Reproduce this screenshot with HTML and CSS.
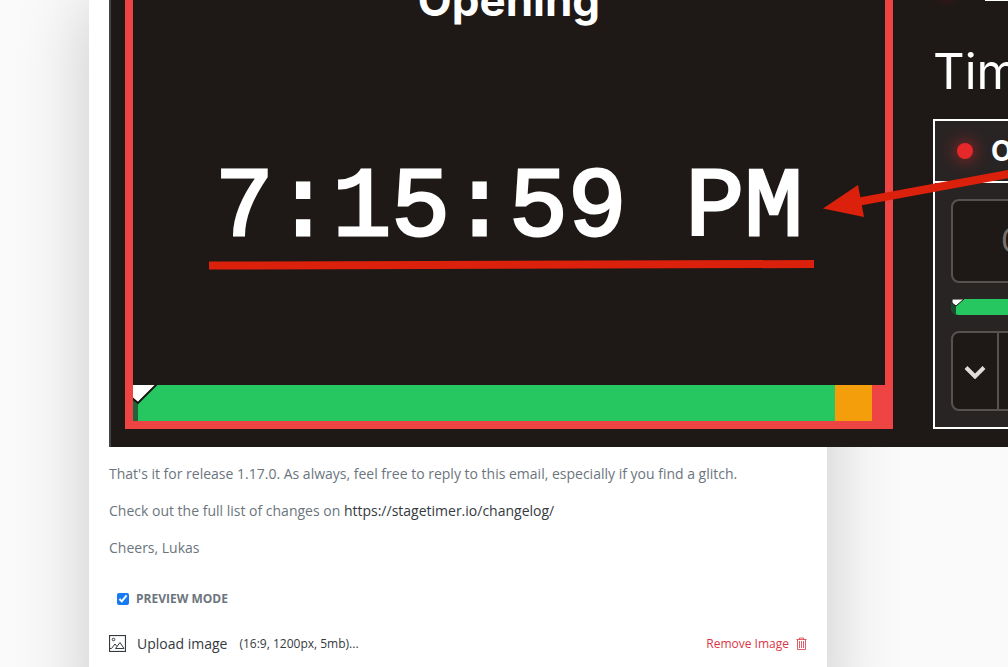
FILE: index.html
```html
<!DOCTYPE html>
<html lang="en">
<head>
<meta charset="utf-8">
<title>Release 1.17.0</title>
<link rel="stylesheet" href="styles.css">
</head>
<body>
<main class="card">
  <figure class="shot">
    <section class="screen">
      <h2 class="screen-title">Opening</h2>
      <div class="clock">7:15:59 PM</div>
      <div class="progress">
        <span class="progress-done"></span>
        <span class="progress-green"></span>
        <span class="progress-amber"></span>
        <span class="progress-red"></span>
        <svg class="marker" viewBox="0 0 26 20" aria-hidden="true"><path d="M-1-2H25L5 18-1 13Z" fill="#fff" stroke="#17130f" stroke-width="2"/></svg>
      </div>
    </section>
    <aside class="side">
      <div class="side-top"><span class="glow"></span><span class="dash"></span></div>
      <h2 class="side-title">Timers</h2>
      <div class="panel">
        <div class="panel-head"><span class="dot"></span><span>Opening</span></div>
        <div class="panel-body">
          <div class="time-box">0:00</div>
          <div class="mini-bar"><svg class="mini-marker" viewBox="0 0 14 16" aria-hidden="true"><path d="M0 0H5V16Q0 14 0 9Z" fill="#1c4a2e"/><path d="M1 0H13L5 7 1 4Z" fill="#fff" stroke="#17130f" stroke-width="1"/></svg></div>
          <div class="button-row">
            <button class="chevron" type="button" aria-label="Expand"><svg width="22" height="14" viewBox="0 0 22 14"><path d="M2 2.500 11 11.500 20 2.500" fill="none" stroke="#e1dddc" stroke-width="4"/></svg></button>
          </div>
        </div>
      </div>
    </aside>
    <svg class="notes" viewBox="0 0 1180 447" aria-hidden="true">
      <path d="M100 265.500 705 264" stroke="#db200b" stroke-width="8" fill="none"/>
      <path d="M748 202 905 173" stroke="#db200b" stroke-width="8" fill="none"/>
      <path d="M714 208.500 749 185 755 217Z" fill="#db200b"/>
    </svg>
  </figure>
  <div class="message">
    <p>That's it for release 1.17.0. As always, feel free to reply to this email, especially if you find a glitch.</p>
    <p>Check out the full list of changes on <a href="https://stagetimer.io/changelog/">https://stagetimer.io/changelog/</a></p>
    <p>Cheers, Lukas</p>
  </div>
  <label class="preview"><input type="checkbox" checked><span>Preview mode</span></label>
  <div class="actions">
    <button class="upload" type="button">
      <svg width="17" height="17" viewBox="0 0 17 17" fill="none" stroke="#343a40"><rect x=".5" y=".5" width="16" height="16" stroke-width="1.200"/><circle cx="4.500" cy="4.500" r="1.300"/><path d="M.5 13.500H2.500L6 9 8 11.500 11 7.500 15 13.500H6.500L8 11.500"/></svg>
      <span>Upload image</span><small>(16:9, 1200px, 5mb)...</small>
    </button>
    <button class="remove" type="button">
      <span>Remove Image</span>
      <svg width="11" height="13" viewBox="0 0 11 13" fill="none" stroke="#dc3545" stroke-width=".8"><path d="M.5 2.500H10.500M3.500 2.500V1H7.500V2.500M1.500 2.500V12.500H9.500V2.500M3.500 4V11M5.500 4V11M7.500 4V11"/></svg>
    </button>
  </div>
</main>
</body>
</html>
```
FILE: styles.css
```css
html {
  overflow: hidden;
}

body {
  margin: 0;
  background: #fafafa;
  font: 14px/21px "Open Sans", sans-serif;
  color: #6c757d;
}

.card {
  box-sizing: border-box;
  min-height: 100vh;
  margin: 0 181px 0 89px;
  padding: 0 20px 80px;
  background: #fff;
  box-shadow: 0 0 70px rgba(0, 0, 0, 0.2);
}

.shot {
  position: relative;
  box-sizing: border-box;
  width: 1180px;
  margin: 0;
  padding: 0 0 18px 14px;
  border-left: 2px solid #454343;
  background: #1e1916;
  color: #fff;
  font-family: Inter, sans-serif;
  display: grid;
  grid-template-columns: 768px 1fr;
  column-gap: 40px;
}

.screen {
  display: flex;
  flex-direction: column;
  border: 8px solid #ef4444;
  border-top: 0;
}

.screen-title {
  margin: 0;
  font-size: 44px;
  line-height: 0;
  font-weight: 700;
  text-align: center;
}

.clock {
  flex: 1;
  display: flex;
  align-items: center;
  justify-content: center;
  padding-top: 32px;
  font: 98px/100px "Liberation Mono", monospace;
  -webkit-text-stroke: 3px #fff;
}

.progress {
  position: relative;
  display: flex;
  height: 36px;
}

.progress-done {
  width: 5px;
  background: #23633b;
}

.progress-green {
  flex: 1;
  background: #26c761;
}

.progress-amber {
  width: 37px;
  background: #f59e0b;
}

.progress-red {
  width: 13px;
  background: #ef4444;
}

.marker {
  position: absolute;
  left: 0;
  top: 0;
  width: 26px;
  height: 20px;
}

.side-top {
  display: flex;
  justify-content: space-between;
  width: 240px;
  height: 42px;
}

.glow {
  width: 28px;
  height: 8px;
  background: radial-gradient(ellipse at top, #2e1717, transparent 70%);
}

.dash {
  width: 188px;
  height: 1px;
  background: #fff;
}

.side-title {
  margin: 0 0 17px;
  font-size: 49px;
  line-height: 60px;
  font-weight: 400;
}

.panel {
  border: 2px solid #fff;
  background: #292424;
}

.panel-head {
  display: flex;
  align-items: center;
  gap: 18px;
  height: 60px;
  padding-left: 22px;
  border-bottom: 2px solid #fff;
  font-size: 28px;
  font-weight: 700;
}

.dot {
  width: 16px;
  height: 16px;
  border-radius: 50%;
  background: #e7282b;
  box-shadow: 0 0 16px 2px rgba(220, 38, 38, 0.6);
}

.panel-body {
  display: flex;
  flex-direction: column;
  gap: 16px;
  padding: 16px;
}

.time-box,
.button-row {
  border: 2px solid #57524f;
  border-radius: 8px;
  background: #1e1916;
}

.time-box {
  padding-left: 48px;
  font-size: 32px;
  line-height: 80px;
  color: #78716c;
}

.mini-bar {
  position: relative;
  height: 16px;
  border-radius: 8px;
  background: #26c761;
}

.mini-marker {
  position: absolute;
  left: 0;
  top: 0;
  width: 14px;
  height: 16px;
}

.button-row {
  display: flex;
  height: 76px;
}

button {
  display: flex;
  align-items: center;
  margin: 0;
  padding: 0;
  border: 0;
  background: none;
  font: inherit;
  color: inherit;
}

.chevron {
  justify-content: center;
  width: 46px;
  padding-top: 2px;
  border-right: 2px solid #57524f;
}

.notes {
  position: absolute;
  left: -2px;
  top: 0;
  width: 1180px;
  height: 447px;
}

.message {
  padding-top: 16px;
}

.message p {
  margin: 0 0 16px;
}

.message a {
  color: #343a40;
  text-decoration: none;
}

.preview {
  display: flex;
  align-items: center;
  gap: 7px;
  margin-top: 30px;
  padding-left: 8px;
  font-size: 12px;
  font-weight: 700;
  text-transform: uppercase;
}

.preview input {
  width: 12px;
  height: 12px;
  margin: 0;
  accent-color: #167bf3;
}

.actions {
  display: flex;
  justify-content: space-between;
  align-items: center;
  margin-top: 24px;
}

.upload {
  color: #343a40;
}

.upload span {
  margin: 0 12px 0 11px;
}

.upload small {
  font-size: 12px;
}

.remove {
  gap: 7px;
  font-size: 12px;
  color: #dc3545;
}
```
